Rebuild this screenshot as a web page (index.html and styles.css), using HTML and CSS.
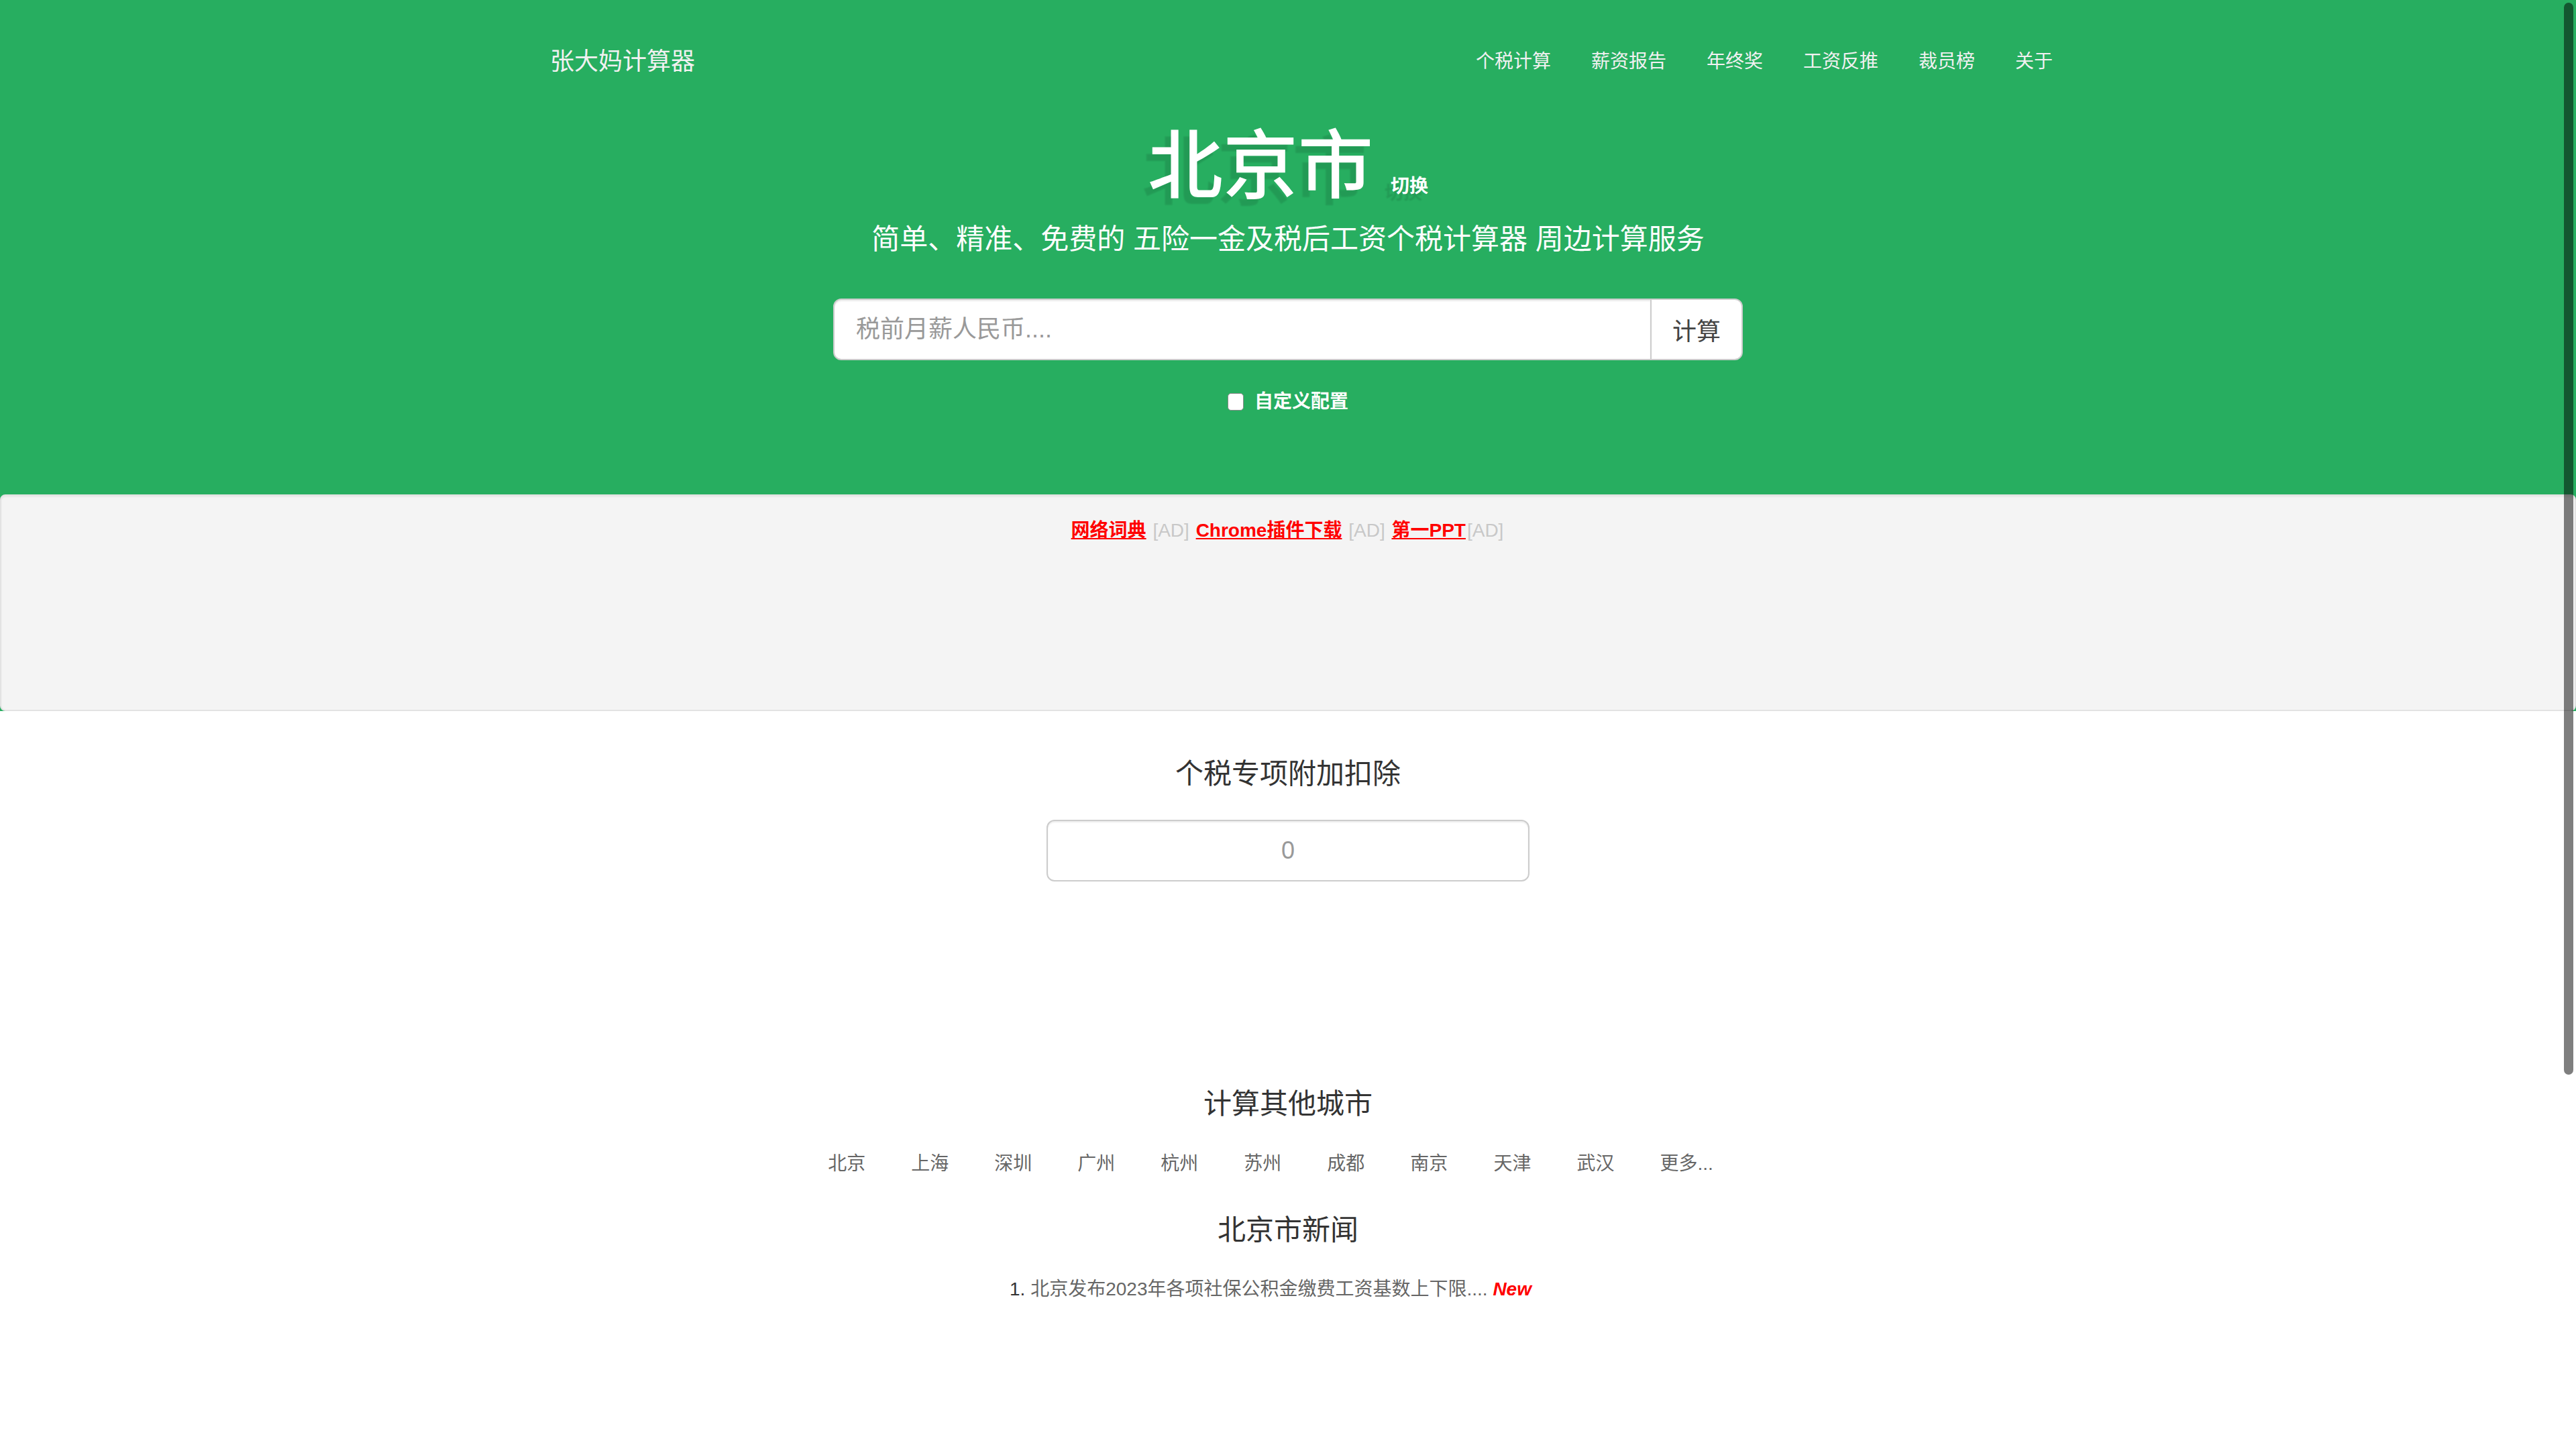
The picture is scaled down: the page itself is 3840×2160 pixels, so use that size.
FILE: index.html
```html
<!DOCTYPE html>
<html lang="zh-CN">
<head>
<meta charset="utf-8">
<title>张大妈计算器</title>
<link rel="stylesheet" href="styles.css">
</head>
<body>
<header class="hero">
  <nav class="navbar">
    <a class="brand" href="#">张大妈计算器</a>
    <ul class="nav-links">
      <li><a href="#">个税计算</a></li>
      <li><a href="#">薪资报告</a></li>
      <li><a href="#">年终奖</a></li>
      <li><a href="#">工资反推</a></li>
      <li><a href="#">裁员榜</a></li>
      <li><a href="#">关于</a></li>
    </ul>
  </nav>
  <h1 class="city-title">北京市<a class="switch" href="#">切换</a></h1>
  <p class="lead">简单、精准、免费的 五险一金及税后工资个税计算器 周边计算服务</p>
  <form class="salary-form">
    <input class="salary-input" type="text" placeholder="税前月薪人民币....">
    <button class="calc-btn" type="button">计算</button>
  </form>
  <label class="custom-check"><input type="checkbox" class="check-box"><span>自定义配置</span></label>
  <div class="well">
    <p class="ads"><a class="ad-link" href="#">网络词典</a> <span class="ad-tag">[AD]</span> <a class="ad-link" href="#">Chrome插件下载</a> <span class="ad-tag">[AD]</span> <a class="ad-link" href="#">第一PPT</a><span class="ad-tag">[AD]</span></p>
  </div>
</header>

<main class="content">
  <h3 class="section-title first">个税专项附加扣除</h3>
  <input class="deduct-input" type="text" placeholder="0">

  <h3 class="section-title cities-title">计算其他城市</h3>
  <div class="city-list">
    <a href="#">北京</a>
    <a href="#">上海</a>
    <a href="#">深圳</a>
    <a href="#">广州</a>
    <a href="#">杭州</a>
    <a href="#">苏州</a>
    <a href="#">成都</a>
    <a href="#">南京</a>
    <a href="#">天津</a>
    <a href="#">武汉</a>
    <a href="#">更多...</a>
  </div>

  <h3 class="section-title news-title">北京市新闻</h3>
  <ol class="news-list">
    <li><a href="#">北京发布2023年各项社保公积金缴费工资基数上下限....</a> <span class="new-tag">New</span></li>
  </ol>
</main>

<div class="scroll-thumb"></div>
</body>
</html>
```

FILE: styles.css
```css
html, body {
  margin: 0;
  padding: 0;
  overflow: hidden;
}

body {
  font-family: "Liberation Sans", "Noto Sans CJK SC", sans-serif;
  font-size: 28px;
  line-height: 40px;
  color: #333;
  background: #fff;
}

a {
  text-decoration: none;
}

.hero {
  background: #27ae60;
  color: #fff;
  text-align: center;
}

.navbar {
  height: 184px;
  display: flex;
  align-items: center;
  justify-content: space-between;
  padding: 0 780px 0 820px;
}

.brand {
  color: #f1f1f1;
  font-size: 36px;
  line-height: 40px;
}

.nav-links {
  display: flex;
  list-style: none;
  margin: 0 -30px 0 0;
  padding: 0;
}

.nav-links a {
  display: block;
  padding: 0 30px;
  color: #f1f1f1;
  font-size: 28px;
  line-height: 40px;
}

.city-title {
  margin: 0;
  height: 130px;
  font-size: 112px;
  line-height: 130px;
  font-weight: 500;
  color: #fff;
  text-shadow: -9px 10px 2px rgba(0, 0, 0, 0.11);
}

.switch {
  margin-left: 26px;
  font-size: 28px;
  line-height: 28px;
  font-weight: 700;
  color: #fff;
}

.lead {
  margin: 13px 0 0;
  font-size: 42px;
  line-height: 60px;
  color: #fdfdfd;
}

.salary-form {
  display: flex;
  width: 1356px;
  margin: 58px auto 0;
}

.salary-input {
  flex: 1;
  height: 92px;
  box-sizing: border-box;
  border: 2px solid #ccc;
  border-radius: 12px 0 0 12px;
  padding: 0 32px;
  font-family: inherit;
  font-size: 36px;
  color: #555;
  background: #fff;
  box-shadow: inset 0 2px 2px rgba(0, 0, 0, 0.075);
  outline: none;
}

.salary-input::placeholder,
.deduct-input::placeholder {
  color: #999;
}

.calc-btn {
  width: 138px;
  height: 92px;
  margin-left: -2px;
  border: 2px solid #ccc;
  border-radius: 0 12px 12px 0;
  background: #fff;
  font-family: inherit;
  font-size: 36px;
  color: #444;
  padding: 0;
}

.custom-check {
  display: flex;
  align-items: center;
  justify-content: center;
  gap: 16px;
  margin-top: 42px;
  font-size: 28px;
  line-height: 40px;
  font-weight: 700;
  color: #fff;
}

.check-box {
  appearance: none;
  -webkit-appearance: none;
  width: 24px;
  height: 26px;
  margin: 0;
  background: #fff;
  border: 1px solid #8a8a8a;
  border-radius: 5px;
}

.well {
  margin-top: 118px;
  height: 323px;
  box-sizing: border-box;
  background: #f4f4f4;
  border: 2px solid #e3e3e3;
  border-radius: 8px;
  padding-top: 32px;
  box-shadow: inset 0 2px 2px rgba(0, 0, 0, 0.05);
}

.ads {
  margin: 0;
  font-size: 28px;
  line-height: 40px;
}

.ad-link {
  color: #ff0000;
  font-weight: 700;
  text-decoration: underline;
}

.ad-tag {
  color: #c8c8c8;
  margin: 0 2px;
}

.content {
  text-align: center;
}

.section-title {
  margin: 0;
  font-size: 42px;
  line-height: 60px;
  font-weight: 400;
  color: #333;
}

.section-title.first {
  margin-top: 64px;
}

.deduct-input {
  display: block;
  width: 720px;
  height: 92px;
  box-sizing: border-box;
  margin: 38px auto 0;
  border: 2px solid #ccc;
  border-radius: 12px;
  text-align: center;
  font-family: inherit;
  font-size: 36px;
  color: #555;
  background: #fff;
  box-shadow: inset 0 2px 2px rgba(0, 0, 0, 0.075);
  outline: none;
}

.cities-title {
  margin-top: 302px;
}

.city-list {
  display: flex;
  justify-content: center;
  gap: 68px;
  margin-top: 39px;
  padding-right: 52px;
  font-size: 28px;
  line-height: 40px;
}

.city-list a {
  color: #666;
}

.news-title {
  margin-top: 49px;
}

.news-list {
  margin: 38px 0 0;
  padding: 0 52px 0 0;
  list-style-position: inside;
  font-size: 28px;
  line-height: 40px;
  color: #333;
}

.news-list a {
  color: #666;
}

.new-tag {
  color: #ff0000;
  font-weight: 700;
  font-style: italic;
}

.scroll-thumb {
  position: fixed;
  top: 4px;
  right: 4px;
  width: 14px;
  height: 1598px;
  border-radius: 7px;
  background: rgba(0, 0, 0, 0.5);
}
```
